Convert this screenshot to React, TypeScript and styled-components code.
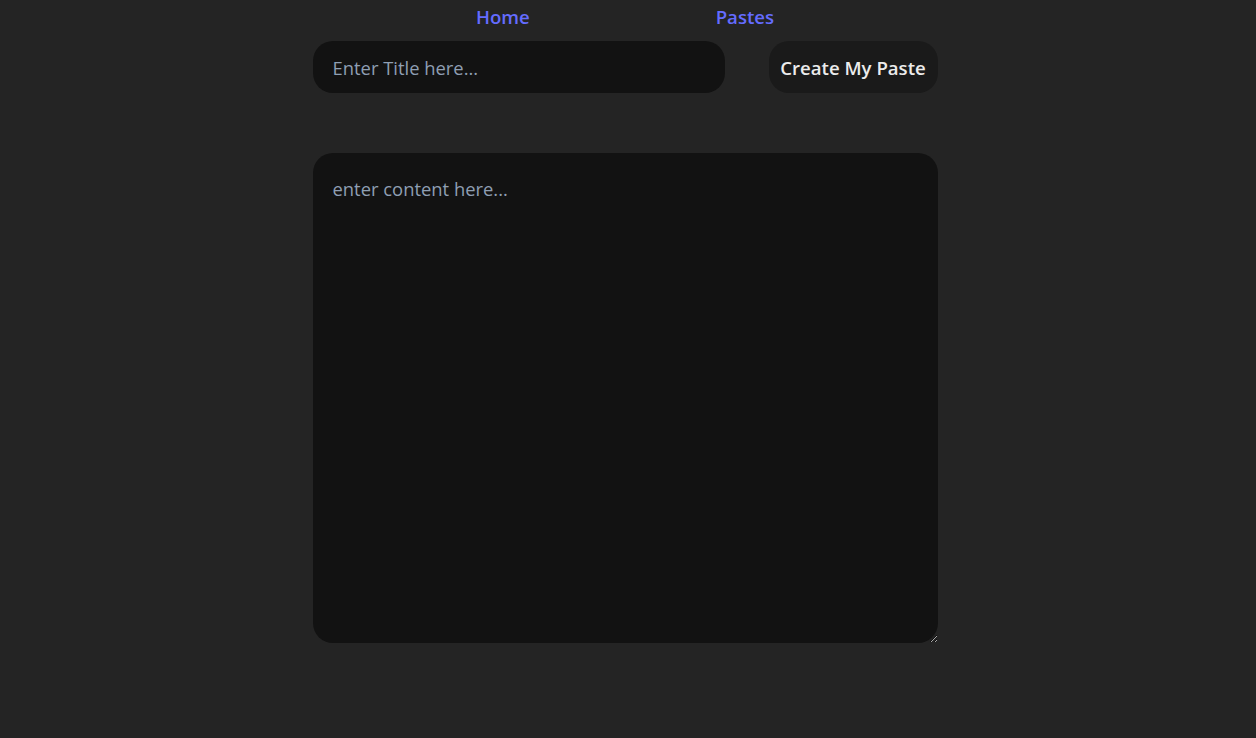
import React from "react";
import styled, { createGlobalStyle } from "styled-components";

const Global = createGlobalStyle`
  html, body { margin: 0; padding: 0; background: #242424; }
  body { font-family: "Open Sans", "Noto Sans", sans-serif; color: rgba(255,255,255,0.87); }
  * { box-sizing: border-box; }
`;

const Page = styled.div`
  min-height: 738px;
  display: flex;
  flex-direction: column;
  align-items: center;
  padding-right: 6px;
`;

const Nav = styled.nav`
  display: flex;
  gap: 186px;
  padding-top: 4px;
  height: 41px;
`;

const NavLink = styled.a`
  color: #646cff;
  font-weight: 600;
  font-size: 18.6px;
  line-height: 26px;
  text-decoration: none;
  cursor: pointer;
`;

const Column = styled.div`
  width: 625px;
  display: flex;
  flex-direction: column;
  gap: 60px;
`;

const Row = styled.div`
  display: flex;
  justify-content: space-between;
  align-items: center;
`;

const TitleInput = styled.input`
  width: 412px;
  height: 52px;
  border: none;
  outline: none;
  border-radius: 20px;
  background: #121212;
  padding: 1px 20px 0;
  font-family: "Open Sans", "Noto Sans", sans-serif;
  font-size: 18.4px;
  color: #e5e7eb;
  &::placeholder { color: #8f9fb3; }
`;

const Button = styled.button`
  width: 169px;
  height: 52px;
  border: none;
  border-radius: 20px;
  background: #1a1a1a;
  color: #ececec;
  font-family: "Open Sans", "Noto Sans", sans-serif;
  font-weight: 600;
  font-size: 18.6px;
  padding: 1px 0 0;
  cursor: pointer;
`;

const Content = styled.textarea`
  width: 625px;
  height: 490px;
  border: none;
  outline: none;
  border-radius: 20px;
  background: #121212;
  padding: 22px 20px;
  font-family: "Open Sans", "Noto Sans", sans-serif;
  font-size: 18.4px;
  line-height: 28px;
  color: #e5e7eb;
  &::placeholder { color: #8f9fb3; }
`;

export default function App() {
  return (
    <>
      <Global />
      <Page>
        <Nav>
          <NavLink>Home</NavLink>
          <NavLink>Pastes</NavLink>
        </Nav>
        <Column>
          <Row>
            <TitleInput placeholder="Enter Title here..." />
            <Button>Create My Paste</Button>
          </Row>
          <Content placeholder="enter content here..." />
        </Column>
      </Page>
    </>
  );
}
